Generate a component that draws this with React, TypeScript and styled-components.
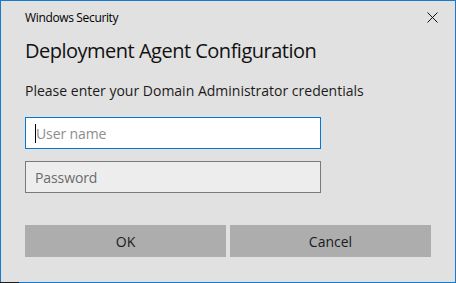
import styled, { createGlobalStyle } from "styled-components";

const GlobalStyle = createGlobalStyle`
  html, body {
    margin: 0;
    padding: 0;
    width: 456px;
    height: 283px;
    overflow: hidden;
    background-color: #e1e1e1;
  }
`;

const DialogWindow = styled.div`
  position: relative;
  width: 456px;
  height: 283px;
  box-sizing: border-box;
  border: 1px solid #1979ca;
  background-color: #e1e1e1;
  font-family: "Open Sans", "Noto Sans", sans-serif;
  color: #1b1b1b;
  display: flex;
  flex-direction: column;
`;

const TitleBar = styled.div`
  display: flex;
  align-items: center;
  justify-content: space-between;
  height: 33px;
  padding-left: 24px;
`;

const TitleText = styled.span`
  font-size: 12px;
  letter-spacing: -0.35px;
  color: #000;
`;

const CloseButton = styled.button`
  width: 46px;
  height: 33px;
  display: flex;
  align-items: center;
  justify-content: center;
  border: none;
  background: transparent;
  padding: 0;
  cursor: pointer;
`;

const Body = styled.div`
  display: flex;
  flex-direction: column;
  padding: 0 24px;
`;

const Heading = styled.h1`
  margin: 3px 0 0;
  font-size: 20px;
  font-weight: 400;
  line-height: 28px;
  letter-spacing: -0.5px;
  color: #111;
`;

const Prompt = styled.p`
  margin: 16px 0 0;
  font-size: 14px;
  line-height: 20px;
  letter-spacing: 0;
  color: #1b1b1b;
`;

const Field = styled.div<{ $focused?: boolean }>`
  margin-top: ${(p) => (p.$focused ? "16px" : "12px")};
  width: 296px;
  height: 32px;
  box-sizing: border-box;
  border: 1px solid ${(p) => (p.$focused ? "#0078d7" : "#7a7a7a")};
  background-color: ${(p) => (p.$focused ? "#fff" : "#ededed")};
  display: flex;
  align-items: center;
  padding-left: 9px;
  font-size: 14px;
  letter-spacing: -0.1px;
  color: ${(p) => (p.$focused ? "#8d8d8d" : "#6b6b6b")};
`;

const Caret = styled.span`
  width: 1px;
  height: 19px;
  background-color: #000;
`;

const ButtonRow = styled.div`
  display: grid;
  grid-template-columns: 1fr 1fr;
  gap: 4px;
  margin-top: 32px;
`;

const DialogButton = styled.button`
  height: 32px;
  border: none;
  background-color: #adadad;
  font-family: "Open Sans", "Noto Sans", sans-serif;
  font-size: 14px;
  color: #1b1b1b;
  padding: 0;
`;

const TaskbarEdge = styled.div`
  position: absolute;
  left: -1px;
  bottom: -1px;
  width: 19px;
  height: 1px;
  background-color: #1c1c1c;
`;

export default function App() {
  return (
    <>
      <GlobalStyle />
      <DialogWindow>
        <TitleBar>
          <TitleText>Windows Security</TitleText>
          <CloseButton aria-label="Close">
            <svg width="11" height="11" viewBox="0 0 11 11">
              <path d="M0.5 0.5 L10.5 10.5 M10.5 0.5 L0.5 10.5" stroke="#111" strokeWidth="1" />
            </svg>
          </CloseButton>
        </TitleBar>
        <Body>
          <Heading>Deployment Agent Configuration</Heading>
          <Prompt>Please enter your Domain Administrator credentials</Prompt>
          <Field $focused>
            <Caret />
            User name
          </Field>
          <Field>Password</Field>
          <ButtonRow>
            <DialogButton>OK</DialogButton>
            <DialogButton>Cancel</DialogButton>
          </ButtonRow>
        </Body>
        <TaskbarEdge />
      </DialogWindow>
    </>
  );
}
